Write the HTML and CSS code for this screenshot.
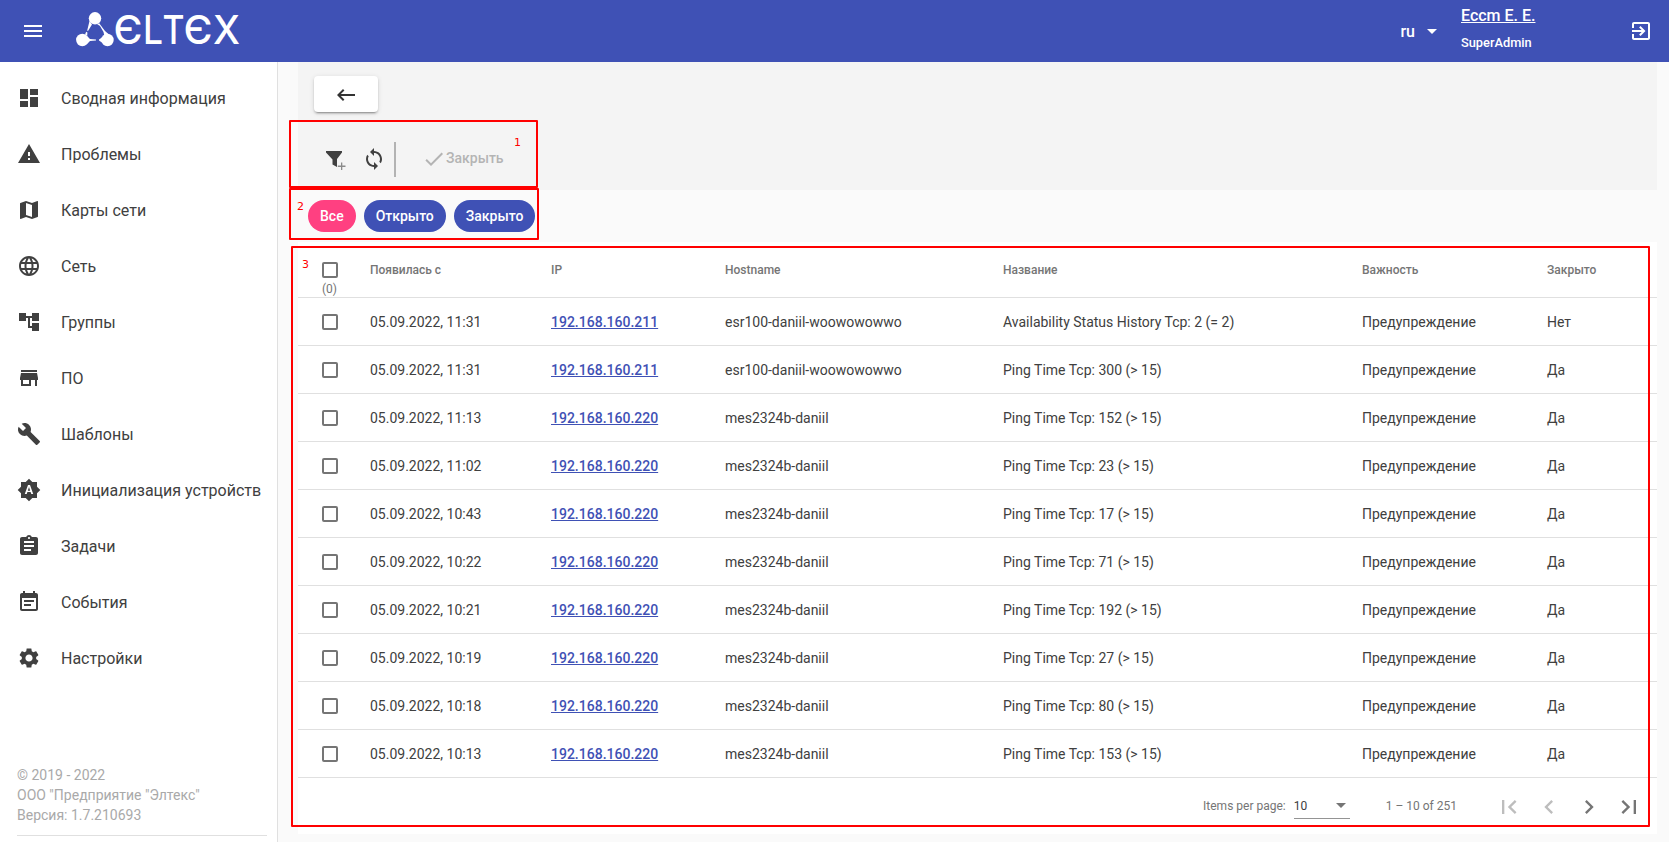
FILE: index.html
```html
<!DOCTYPE html>
<html lang="ru">
<head>
  <meta charset="utf-8">
  <title>ECCM</title>
  <link rel="stylesheet" href="styles.css">
</head>
<body>

  <header class="header">
    <svg class="icon menu" viewBox="0 0 24 24"><path d="M3 18h18v-2H3v2zm0-5h18v-2H3v2zm0-7v2h18V6H3z"/></svg>
    <svg class="logo" viewBox="0 -10 170 60" role="img" aria-label="ELTEX">
      <circle cx="20" cy="7.300" r="6.200"/>
      <circle cx="7.300" cy="29" r="6.200"/>
      <circle cx="32.500" cy="29" r="6.200"/>
      <path d="M14.500 10L17 13.500l-4 6.500-.8-.4zM10 23.500l1.200-2.700 1.200.6-.2 3.300zM12 25l3 3.100 6 .4v1l-6 .4-3 3.100zM28 25.800l-4 2.700v1l4 2.700zM34 23.500l-4.500 2-1-4.500-3.800-6.500.8-.5 4.500 6zM22 13l2.200-.8 1.300 1.800-1 .7z"/>
      <text y="33" textLength="29" lengthAdjust="spacingAndGlyphs" x="38.500">Є</text>
      <text y="33" textLength="20" lengthAdjust="spacingAndGlyphs" x="68">L</text>
      <text y="33" textLength="22" lengthAdjust="spacingAndGlyphs" x="87.500">T</text>
      <text y="33" textLength="29" lengthAdjust="spacingAndGlyphs" x="108.500">Є</text>
      <text y="33" textLength="27" lengthAdjust="spacingAndGlyphs" x="138">X</text>
    </svg>
    <div class="lang">ru <span class="caret"></span></div>
    <div class="user">
      <a class="user-name">Eccm E. E.</a>
      <span class="user-role">SuperAdmin</span>
    </div>
    <svg class="icon" viewBox="0 0 24 24"><path d="M10.090 15.590L11.500 17l5-5-5-5-1.410 1.410L12.670 11H3v2h9.670l-2.580 2.590zM19 3H5c-1.110 0-2 .9-2 2v4h2V5h14v14H5v-4H3v4c0 1.100.89 2 2 2h14c1.100 0 2-.9 2-2V5c0-1.100-.9-2-2-2z"/></svg>
  </header>

  <div class="layout">
    <aside class="sidebar">
      <nav class="nav">
        <a class="nav-item"><svg class="icon" viewBox="0 0 24 24"><path d="M3 13h8V3H3v10zm0 8h8v-6H3v6zm10 0h8V11h-8v10zm0-18v6h8V3h-8z"/></svg>Сводная информация</a>
        <a class="nav-item"><svg class="icon" viewBox="0 0 24 24"><path d="M1 21h22L12 2 1 21zm12-3h-2v-2h2v2zm0-4h-2v-4h2v4z"/></svg>Проблемы</a>
        <a class="nav-item"><svg class="icon" viewBox="0 0 24 24"><path d="M20.500 3l-.16.03L15 5.100 9 3 3.360 4.900c-.21.07-.36.25-.36.48V20.500c0 .28.22.5.5.5l.16-.03L9 18.900l6 2.100 5.640-1.900c.21-.07.36-.25.36-.48V3.500c0-.28-.22-.5-.5-.5zM15 19l-6-2.110V5l6 2.110V19z"/></svg>Карты сети</a>
        <a class="nav-item"><svg class="icon" viewBox="0 0 24 24"><path d="M11.990 2C6.470 2 2 6.480 2 12s4.470 10 9.990 10C17.520 22 22 17.520 22 12S17.520 2 11.990 2zm6.930 6h-2.950c-.32-1.250-.78-2.450-1.380-3.560 1.840.63 3.370 1.910 4.330 3.560zM12 4.040c.83 1.200 1.480 2.530 1.910 3.960h-3.820c.43-1.430 1.080-2.760 1.910-3.960zM4.260 14C4.100 13.360 4 12.690 4 12s.1-1.360.26-2h3.380c-.08.66-.14 1.320-.14 2s.06 1.340.14 2H4.260zm.82 2h2.950c.32 1.250.78 2.450 1.380 3.560-1.840-.63-3.370-1.900-4.330-3.560zm2.950-8H5.080c.96-1.660 2.490-2.930 4.330-3.560C8.810 5.550 8.350 6.750 8.030 8zM12 19.960c-.83-1.200-1.480-2.530-1.910-3.960h3.820c-.43 1.430-1.080 2.760-1.910 3.960zM14.340 14H9.660c-.09-.66-.16-1.320-.16-2s.07-1.350.16-2h4.680c.09.65.16 1.320.16 2s-.07 1.340-.16 2zm.25 5.560c.6-1.110 1.060-2.310 1.380-3.560h2.950c-.96 1.650-2.490 2.930-4.330 3.560zM16.360 14c.08-.66.14-1.320.14-2s-.06-1.340-.14-2h3.380c.16.64.26 1.310.26 2s-.1 1.360-.26 2h-3.380z"/></svg>Сеть</a>
        <a class="nav-item"><svg class="icon" viewBox="0 0 24 24"><path d="M22 11V3h-7v3H9V3H2v8h7V8h2v10h4v3h7v-8h-7v3h-2V8h2v3z"/></svg>Группы</a>
        <a class="nav-item"><svg class="icon" viewBox="0 0 24 24"><path d="M20 4H4v2h16V4zm1 10v-2l-1-5H4l-1 5v2h1v6h10v-6h4v6h2v-6h1zm-9 4H6v-4h6v4z"/></svg>ПО</a>
        <a class="nav-item"><svg class="icon" viewBox="0 0 24 24"><path d="M22.700 19l-9.100-9.100c.9-2.300.4-5-1.500-6.900-2-2-5-2.400-7.400-1.300L9 6 6 9 1.600 4.700C.4 7.100.9 10.100 2.900 12.100c1.900 1.900 4.600 2.400 6.900 1.500l9.100 9.100c.4.4 1 .4 1.400 0l2.300-2.300c.5-.4.5-1.100.1-1.400z"/></svg>Шаблоны</a>
        <a class="nav-item"><svg class="icon" viewBox="0 0 24 24"><path d="M10.850 12.650h2.300L12 9l-1.150 3.650zM20 8.690V4h-4.690L12 .69 8.690 4H4v4.690L.69 12 4 15.310V20h4.690L12 23.310 15.310 20H20v-4.690L23.310 12 20 8.690zM14.300 16l-.7-2h-3.200l-.7 2H7.800L11 7h2l3.200 9h-1.900z"/></svg>Инициализация устройств</a>
        <a class="nav-item"><svg class="icon" viewBox="0 0 24 24"><path d="M19 3h-4.180C14.400 1.840 13.300 1 12 1c-1.300 0-2.400.84-2.820 2H5c-1.100 0-2 .9-2 2v14c0 1.100.9 2 2 2h14c1.100 0 2-.9 2-2V5c0-1.100-.9-2-2-2zm-7 0c.55 0 1 .45 1 1s-.45 1-1 1-1-.45-1-1 .45-1 1-1zm2 14H7v-2h7v2zm3-4H7v-2h10v2zm0-4H7V7h10v2z"/></svg>Задачи</a>
        <a class="nav-item"><svg class="icon" viewBox="0 0 24 24"><path d="M17 10H7v2h10v-2zm2-7h-1V1h-2v2H8V1H6v2H5c-1.110 0-1.990.9-1.990 2L3 19c0 1.100.89 2 2 2h14c1.100 0 2-.9 2-2V5c0-1.100-.9-2-2-2zm0 16H5V8h14v11zm-5-5H7v2h7v-2z"/></svg>События</a>
        <a class="nav-item"><svg class="icon" viewBox="0 0 24 24"><path d="M19.140 12.940c.04-.3.06-.61.06-.94 0-.32-.02-.64-.07-.94l2.030-1.580c.18-.14.23-.41.12-.61l-1.920-3.320c-.12-.22-.37-.29-.59-.22l-2.390.96c-.5-.38-1.030-.7-1.620-.94l-.36-2.540c-.04-.24-.24-.41-.48-.41h-3.840c-.24 0-.43.17-.47.41l-.36 2.540c-.59.24-1.130.57-1.620.94l-2.390-.96c-.22-.08-.47 0-.59.22L2.740 8.870c-.12.21-.08.47.12.61l2.030 1.580c-.05.3-.09.63-.09.94s.02.64.07.94l-2.030 1.580c-.18.14-.23.41-.12.61l1.920 3.320c.12.22.37.29.59.22l2.390-.96c.5.38 1.030.7 1.620.94l.36 2.540c.05.24.24.41.48.41h3.840c.24 0 .44-.17.47-.41l.36-2.540c.59-.24 1.130-.56 1.620-.94l2.390.96c.22.08.47 0 .59-.22l1.920-3.320c.12-.22.07-.47-.12-.61l-2.010-1.580zM12 15.600c-1.980 0-3.600-1.620-3.600-3.600s1.620-3.600 3.600-3.600 3.600 1.620 3.600 3.600-1.620 3.600-3.600 3.600z"/></svg>Настройки</a>
      </nav>
      <footer class="copyright">
        <div>© 2019 - 2022</div>
        <div>ООО "Предприятие "Элтекс"</div>
        <div>Версия: 1.7.210693</div>
      </footer>
    </aside>

    <main class="content">
      <section class="top-panel">
        <button class="back"><svg class="icon" viewBox="0 0 24 24"><path d="M21 11H6.830l3.580-3.590L9 6l-6 6 6 6 1.410-1.410L6.830 13H21z"/></svg></button>
        <div class="toolbar">
          <svg class="icon filter" viewBox="0 0 24 24"><path d="M4 4h16v1.500L15 12v8l-4.500-2.500V12.500L4 5.500z"/><path class="plus" d="M19 15.500h1.300V18.600H23.500v1.300h-3.200V23H19v-3.100h-3.200V18.600H19z"/></svg>
          <svg class="icon" viewBox="0 0 24 24"><path d="M12 4V1L8 5l4 4V6c3.310 0 6 2.690 6 6 0 1.010-.25 1.970-.7 2.800l1.460 1.460C19.540 15.030 20 13.570 20 12c0-4.420-3.580-8-8-8zm0 14c-3.310 0-6-2.690-6-6 0-1.010.25-1.970.7-2.800L5.240 7.740C4.460 8.970 4 10.430 4 12c0 4.420 3.580 8 8 8v3l4-4-4-4v3z"/></svg>
          <span class="divider"></span>
          <button class="close-btn" disabled><svg class="icon" viewBox="0 0 24 24"><path d="M9 16.170L4.830 12l-1.420 1.410L9 19 21 7l-1.410-1.410z"/></svg><span>Закрыть</span></button>
        </div>
        <div class="mark mark-1"><span>1</span></div>
      </section>

      <section class="chips">
        <span class="chip active">Все</span>
        <span class="chip">Открыто</span>
        <span class="chip">Закрыто</span>
        <div class="mark mark-2"><span>2</span></div>
      </section>

      <section class="card">
        <table class="table">
          <colgroup>
            <col class="c-check"><col class="c-date"><col class="c-ip"><col class="c-host"><col class="c-name"><col class="c-level"><col>
          </colgroup>
          <thead>
            <tr><th class="check-all"><i class="box"></i><span>(0)</span></th><th>Появилась с</th><th>IP</th><th>Hostname</th><th>Название</th><th>Важность</th><th>Закрыто</th></tr>
          </thead>
          <tbody>
            <tr><td><i class="box"></i></td><td>05.09.2022, 11:31</td><td><a>192.168.160.211</a></td><td>esr100-daniil-woowowowwo</td><td>Availability Status History Tcp: 2 (= 2)</td><td>Предупреждение</td><td>Нет</td></tr>
            <tr><td><i class="box"></i></td><td>05.09.2022, 11:31</td><td><a>192.168.160.211</a></td><td>esr100-daniil-woowowowwo</td><td>Ping Time Tcp: 300 (&gt; 15)</td><td>Предупреждение</td><td>Да</td></tr>
            <tr><td><i class="box"></i></td><td>05.09.2022, 11:13</td><td><a>192.168.160.220</a></td><td>mes2324b-daniil</td><td>Ping Time Tcp: 152 (&gt; 15)</td><td>Предупреждение</td><td>Да</td></tr>
            <tr><td><i class="box"></i></td><td>05.09.2022, 11:02</td><td><a>192.168.160.220</a></td><td>mes2324b-daniil</td><td>Ping Time Tcp: 23 (&gt; 15)</td><td>Предупреждение</td><td>Да</td></tr>
            <tr><td><i class="box"></i></td><td>05.09.2022, 10:43</td><td><a>192.168.160.220</a></td><td>mes2324b-daniil</td><td>Ping Time Tcp: 17 (&gt; 15)</td><td>Предупреждение</td><td>Да</td></tr>
            <tr><td><i class="box"></i></td><td>05.09.2022, 10:22</td><td><a>192.168.160.220</a></td><td>mes2324b-daniil</td><td>Ping Time Tcp: 71 (&gt; 15)</td><td>Предупреждение</td><td>Да</td></tr>
            <tr><td><i class="box"></i></td><td>05.09.2022, 10:21</td><td><a>192.168.160.220</a></td><td>mes2324b-daniil</td><td>Ping Time Tcp: 192 (&gt; 15)</td><td>Предупреждение</td><td>Да</td></tr>
            <tr><td><i class="box"></i></td><td>05.09.2022, 10:19</td><td><a>192.168.160.220</a></td><td>mes2324b-daniil</td><td>Ping Time Tcp: 27 (&gt; 15)</td><td>Предупреждение</td><td>Да</td></tr>
            <tr><td><i class="box"></i></td><td>05.09.2022, 10:18</td><td><a>192.168.160.220</a></td><td>mes2324b-daniil</td><td>Ping Time Tcp: 80 (&gt; 15)</td><td>Предупреждение</td><td>Да</td></tr>
            <tr><td><i class="box"></i></td><td>05.09.2022, 10:13</td><td><a>192.168.160.220</a></td><td>mes2324b-daniil</td><td>Ping Time Tcp: 153 (&gt; 15)</td><td>Предупреждение</td><td>Да</td></tr>
          </tbody>
        </table>
        <div class="paginator">
          <span>Items per page:</span>
          <div class="page-size">10 <span class="caret"></span></div>
          <span class="range">1 – 10 of 251</span>
          <button class="page-btn" disabled><svg viewBox="0 0 24 24"><path d="M18.410 16.590L13.820 12l4.590-4.590L17 6l-6 6 6 6zM6 6h2v12H6z"/></svg></button>
          <button class="page-btn" disabled><svg viewBox="0 0 24 24"><path d="M15.410 7.410L14 6l-6 6 6 6 1.410-1.410L10.830 12z"/></svg></button>
          <button class="page-btn"><svg viewBox="0 0 24 24"><path d="M10 6L8.590 7.410 13.170 12l-4.580 4.590L10 18l6-6z"/></svg></button>
          <button class="page-btn"><svg viewBox="0 0 24 24"><path d="M5.590 7.410L10.180 12l-4.590 4.590L7 18l6-6-6-6zM16 6h2v12h-2z"/></svg></button>
        </div>
        <div class="mark mark-3"><span>3</span></div>
      </section>
    </main>
  </div>

</body>
</html>
```
FILE: styles.css
```css
* {
  box-sizing: border-box;
}

body {
  margin: 0;
  height: 100vh;
  overflow: hidden;
  background: #fafafa;
  color: #404040;
  font-family: Roboto, "Noto Sans", sans-serif;
  font-size: 14px;
}

button {
  border: none;
  background: none;
  padding: 0;
  font-family: inherit;
}

.icon {
  width: 24px;
  height: 24px;
  flex: none;
  fill: currentColor;
}

.caret {
  border: 5px solid transparent;
  border-top-color: currentColor;
  border-bottom: none;
}

/* header */
.header {
  display: flex;
  align-items: center;
  height: 62px;
  padding: 0 16px 0 21px;
  background: #3f51b5;
  color: #fff;
}

.logo {
  width: 170px;
  height: 60px;
  margin-left: 30px;
  fill: #fff;
}

.logo text {
  font-family: Inter, sans-serif;
  font-size: 39px;
  font-weight: 500;
}

.lang {
  display: flex;
  align-items: center;
  gap: 12px;
  margin-left: auto;
  font-size: 16px;
  font-weight: 500;
}

.user {
  display: flex;
  flex-direction: column;
  gap: 9px;
  width: 168px;
  height: 50px;
  margin-left: 24px;
  font-weight: 500;
}

.user-name {
  font-size: 16px;
  line-height: 19px;
  text-decoration: underline;
}

.user-role {
  font-size: 12.8px;
  line-height: 18px;
}

/* sidebar */
.layout {
  display: flex;
  height: calc(100vh - 62px);
}

.sidebar {
  display: flex;
  flex-direction: column;
  justify-content: space-between;
  width: 278px;
  flex: none;
  padding: 8px 10px 6px 17px;
  background: #fff;
  border-right: 1px solid #e0e0e0;
}

.nav-item {
  display: flex;
  align-items: center;
  gap: 20px;
  height: 56px;
  font-size: 16px;
  white-space: nowrap;
}

.copyright {
  padding-bottom: 10px;
  border-bottom: 1px solid #e0e0e0;
  color: #a9a9a9;
  line-height: 20px;
}

/* content */
.content {
  flex: 1;
  padding: 0 12px 0 20px;
}

.top-panel {
  position: relative;
  height: 128px;
  padding: 14px 16px;
  background: #f4f4f4;
}

.back {
  display: flex;
  align-items: center;
  justify-content: center;
  width: 64px;
  height: 36px;
  padding-top: 2px;
  border-radius: 4px;
  background: #fff;
  color: #333;
  box-shadow: 0 3px 1px -2px rgba(0, 0, 0, .2), 0 2px 2px 0 rgba(0, 0, 0, .14), 0 1px 5px 0 rgba(0, 0, 0, .12);
}

.toolbar {
  display: flex;
  align-items: center;
  gap: 16px;
  height: 36px;
  margin: 29px 0 0 8px;
}

.plus {
  fill: #8a8a8a;
}

.divider {
  width: 2px;
  height: 35px;
  margin-left: -8px;
  background: #b3b3b3;
}

.close-btn {
  display: flex;
  align-items: center;
  margin-left: 10px;
  color: #b4b4b4;
  font-size: 14px;
  font-weight: 500;
}

.close-btn span {
  padding-bottom: 2px;
}

.chips {
  position: relative;
  display: flex;
  gap: 8px;
  padding: 10px;
}

.chip {
  height: 32px;
  padding: 0 12px;
  border-radius: 16px;
  background: #3f51b5;
  color: #fff;
  font-weight: 500;
  line-height: 32px;
}

.chip.active {
  background: #ff4081;
}

/* table */
.card {
  position: relative;
  background: #fff;
}

.table {
  width: 100%;
  table-layout: fixed;
  border-collapse: separate;
  border-spacing: 0;
}

.c-check { width: 72px; }
.c-date { width: 181px; }
.c-ip { width: 174px; }
.c-host { width: 278px; }
.c-name { width: 359px; }
.c-level { width: 185px; }

.table th,
.table td {
  height: 48px;
  padding: 0;
  border-bottom: 1px solid #e0e0e0;
  text-align: left;
}

.table th {
  height: 56px;
  color: #757575;
  font-size: 12px;
  font-weight: 500;
}

.table th:first-child,
.table td:first-child {
  padding-left: 24px;
}

.table .check-all {
  padding-top: 18px;
}

.check-all span {
  display: block;
  margin-top: 4px;
  font-weight: 400;
  line-height: 14px;
}

.table a {
  color: #3f51b5;
  font-weight: 500;
  text-decoration: underline;
}

.box {
  display: block;
  width: 16px;
  height: 16px;
  border: 2px solid #757575;
  border-radius: 2px;
}

.paginator {
  display: flex;
  align-items: center;
  justify-content: flex-end;
  height: 56px;
  padding-right: 8px;
  color: #757575;
  font-size: 12px;
}

.page-size {
  display: flex;
  align-items: center;
  justify-content: space-between;
  width: 56px;
  height: 25px;
  margin: 0 36px 0 8px;
  padding-right: 4px;
  border-bottom: 1px solid #949494;
  color: #404040;
}

.page-size .caret {
  color: #757575;
}

.range {
  margin-right: 32px;
}

.page-btn {
  width: 40px;
  height: 40px;
  padding: 7px 6px 5px;
}

.page-btn svg {
  display: block;
  width: 28px;
  height: 28px;
  fill: #757575;
}

.page-btn:disabled svg {
  fill: #bdbdbd;
}

/* numbered frames over the page areas */
.mark {
  position: absolute;
  border: 2px solid #f00;
  border-radius: 1px;
  color: #f00;
  font: 11px/12px "DejaVu Sans", sans-serif;
}

.mark span {
  position: absolute;
}

.mark-1 {
  left: -9px;
  top: 58px;
  width: 249px;
  height: 68px;
}

.mark-1 span {
  right: 15px;
  top: 15px;
}

.mark-2 {
  left: -9px;
  top: -2px;
  width: 250px;
  height: 52px;
}

.mark-2 span {
  left: 6px;
  top: 11px;
}

.mark-3 {
  left: -7px;
  top: 4px;
  width: 1359px;
  height: 581px;
}

.mark-3 span {
  left: 9px;
  top: 11px;
}
```
